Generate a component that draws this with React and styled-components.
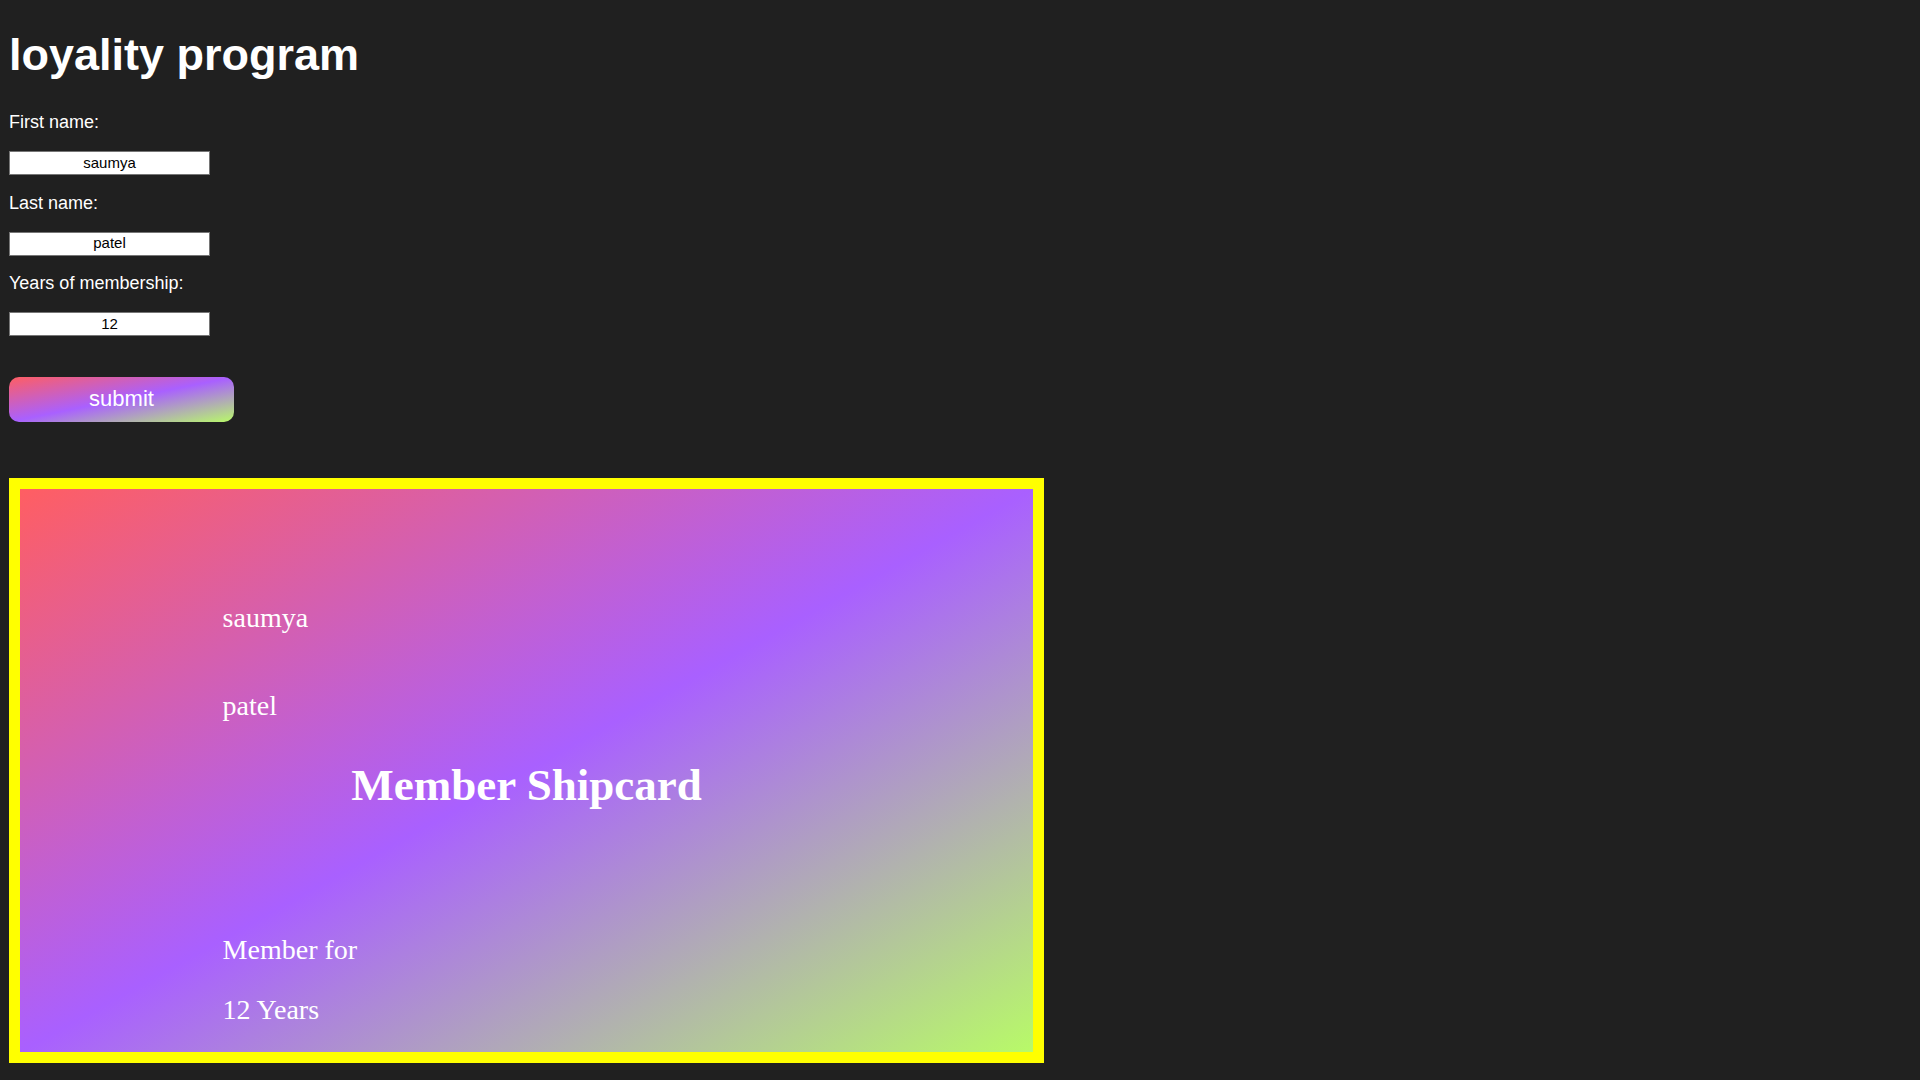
import React, { useState } from 'react';
import styled, { createGlobalStyle } from "styled-components"

const GlobalStyle = createGlobalStyle`
html, body {
  margin: 0;
  padding: 0;
  background-color: #202020;
}
body {
  font-family: "Liberation Sans", Arial, sans-serif;
  color: white;
}
`

const gradient = `linear-gradient(to bottom right, #ff5e62, #a960ff, #b8fa68)`

const Page = styled.div`
min-height: 100vh;
box-sizing: border-box;
padding: 30px 9px 8px;
display: flex;
flex-direction: column;
align-items: flex-start;
`

const Title = styled.h1`
margin: 0 0 32px 0;
font-size: 45px;
line-height: 50px;
font-weight: 700;
color: white;
`

const Form = styled.form`
display: flex;
flex-direction: column;
align-items: flex-start;
`

const Label = styled.label`
font-size: 18px;
line-height: 21px;
color: white;
margin-bottom: 18px;
`

const Input = styled.input`
width: 201px;
height: 24px;
box-sizing: border-box;
margin: 0 0 ${props => props.$last ? "40.67px" : "17.67px"} 0;
padding: 0 2px 2px;
border: 1px solid #767676;
background: white;
color: black;
font-family: "Liberation Sans", Arial, sans-serif;
font-size: 15px;
text-align: center;
outline: none;
`

const Button = styled.button`
width: 225px;
height: 45px;
border: none;
border-radius: 10px;
background: ${gradient};
color: white;
font-family: "Liberation Sans", Arial, sans-serif;
font-size: 22px;
cursor: pointer;
padding: 0;
margin-bottom: 56px;
`

const Card = styled.div`
width: 1035px;
height: 585px;
box-sizing: border-box;
border: 11px solid #ffff00;
background: ${gradient};
padding: 113px 0 0;
display: flex;
flex-direction: column;
font-family: "Liberation Serif", "Times New Roman", serif;
color: white;
`

const CardLine = styled.p`
margin: 0 0 ${props => props.$after || 0}px 20%;
font-size: 28px;
line-height: 32px;
`

const CardTitle = styled.h2`
margin: 0 0 124px;
font-size: 45px;
line-height: 50px;
font-weight: 700;
text-align: center;
`

const App = () => {
  const [first, setFirst] = useState("saumya")
  const [last, setLast] = useState("patel")
  const [years, setYears] = useState("12")

  return (
    <>
      <GlobalStyle />
      <Page>
        <Title>loyality program</Title>
        <Form onSubmit={e => e.preventDefault()}>
          <Label htmlFor="fname">First name:</Label>
          <Input id="fname" value={first} onChange={e => setFirst(e.target.value)} />
          <Label htmlFor="lname">Last name:</Label>
          <Input id="lname" value={last} onChange={e => setLast(e.target.value)} />
          <Label htmlFor="years">Years of membership:</Label>
          <Input id="years" $last value={years} onChange={e => setYears(e.target.value)} />
          <Button type="submit">submit</Button>
        </Form>

        <Card>
          <CardLine $after={56}>{first}</CardLine>
          <CardLine $after={38}>{last}</CardLine>
          <CardTitle>Member Shipcard</CardTitle>
          <CardLine $after={28}>Member for</CardLine>
          <CardLine>{years} Years</CardLine>
        </Card>
      </Page>
    </>
  )
}

export default App
